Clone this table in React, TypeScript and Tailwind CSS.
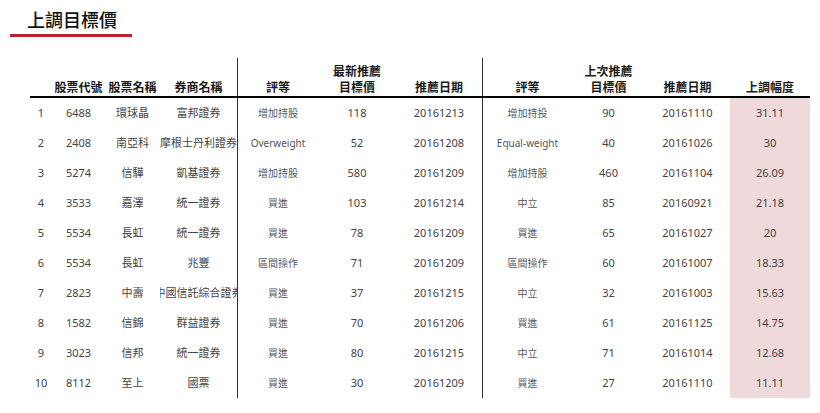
const cols =
  'grid grid-cols-[22px_53px_55px_77px_81px_78px_86px_90px_73px_85px_80px]'

type Row = {
  no: number
  code: string
  name: string
  broker: string
  rating: string
  target: number
  date: string
  prevRating: string
  prevTarget: number
  prevDate: string
  change: string
}

const rows: Row[] = [
  { no: 1, code: '6488', name: '環球晶', broker: '富邦證券', rating: '增加持股', target: 118, date: '20161213', prevRating: '增加持投', prevTarget: 90, prevDate: '20161110', change: '31.11' },
  { no: 2, code: '2408', name: '南亞科', broker: '摩根士丹利證券', rating: 'Overweight', target: 52, date: '20161208', prevRating: 'Equal-weight', prevTarget: 40, prevDate: '20161026', change: '30' },
  { no: 3, code: '5274', name: '信驊', broker: '凱基證券', rating: '增加持股', target: 580, date: '20161209', prevRating: '增加持股', prevTarget: 460, prevDate: '20161104', change: '26.09' },
  { no: 4, code: '3533', name: '嘉澤', broker: '統一證券', rating: '買進', target: 103, date: '20161214', prevRating: '中立', prevTarget: 85, prevDate: '20160921', change: '21.18' },
  { no: 5, code: '5534', name: '長虹', broker: '統一證券', rating: '買進', target: 78, date: '20161209', prevRating: '買進', prevTarget: 65, prevDate: '20161027', change: '20' },
  { no: 6, code: '5534', name: '長虹', broker: '兆豐', rating: '區間操作', target: 71, date: '20161209', prevRating: '區間操作', prevTarget: 60, prevDate: '20161007', change: '18.33' },
  { no: 7, code: '2823', name: '中壽', broker: '中國信託綜合證券', rating: '買進', target: 37, date: '20161215', prevRating: '中立', prevTarget: 32, prevDate: '20161003', change: '15.63' },
  { no: 8, code: '1582', name: '信錦', broker: '群益證券', rating: '買進', target: 70, date: '20161206', prevRating: '買進', prevTarget: 61, prevDate: '20161125', change: '14.75' },
  { no: 9, code: '3023', name: '信邦', broker: '統一證券', rating: '買進', target: 80, date: '20161215', prevRating: '中立', prevTarget: 71, prevDate: '20161014', change: '12.68' },
  { no: 10, code: '8112', name: '至上', broker: '國票', rating: '買進', target: 30, date: '20161209', prevRating: '買進', prevTarget: 27, prevDate: '20161110', change: '11.11' },
]

const HeadCell = ({ lines, divider }: { lines: string[]; divider?: boolean }) => (
  <div
    className={`flex flex-col items-center justify-end text-center leading-[16px] ${
      divider ? 'border-l border-[#333]' : ''
    }`}
  >
    {lines.map((l) => (
      <span key={l} className="whitespace-nowrap">
        {l}
      </span>
    ))}
  </div>
)

const Cell = ({
  children,
  divider,
  small,
  pink,
}: {
  children: React.ReactNode
  divider?: boolean
  small?: boolean
  pink?: boolean
}) => (
  <div
    className={`flex items-center justify-center overflow-hidden whitespace-nowrap ${
      divider ? 'border-l border-[#333]' : ''
    } ${small ? 'text-[10px] text-[#555]' : 'text-[11px] text-[#444]'} ${pink ? 'bg-[#efd9da]' : ''}`}
  >
    {children}
  </div>
)

export default function App() {
  return (
    <div className="relative h-[413px] w-[820px] overflow-hidden bg-white font-['Noto_Sans','Noto_Sans_CJK_TC',sans-serif]">
      <div className="pl-[27px] pt-[8px] text-[18px] leading-[24px] font-medium text-[#111]">
        上調目標價
      </div>
      <div className="ml-[10px] mt-[2px] h-[3px] w-[122px] bg-[#b3262b]" />

      <div className="ml-[30px] mt-[21px] w-[780px]">
        <div className={`${cols} h-[38px] text-[12px] font-semibold text-[#1a1a1a]`}>
          <HeadCell lines={['']} />
          <HeadCell lines={['股票代號']} />
          <HeadCell lines={['股票名稱']} />
          <HeadCell lines={['券商名稱']} />
          <HeadCell lines={['評等']} divider />
          <HeadCell lines={['最新推薦', '目標價']} />
          <HeadCell lines={['推薦日期']} />
          <HeadCell lines={['評等']} divider />
          <HeadCell lines={['上次推薦', '目標價']} />
          <HeadCell lines={['推薦日期']} />
          <HeadCell lines={['上調幅度']} />
        </div>
        <div className="h-[2px] bg-black" />

        {rows.map((r) => (
          <div key={r.no} className={`${cols} h-[30px]`}>
            <Cell>{r.no}</Cell>
            <Cell>{r.code}</Cell>
            <Cell>{r.name}</Cell>
            <Cell>{r.broker}</Cell>
            <Cell divider small>
              {r.rating}
            </Cell>
            <Cell>{r.target}</Cell>
            <Cell>{r.date}</Cell>
            <Cell divider small>
              {r.prevRating}
            </Cell>
            <Cell>{r.prevTarget}</Cell>
            <Cell>{r.prevDate}</Cell>
            <Cell pink>{r.change}</Cell>
          </div>
        ))}
      </div>
    </div>
  )
}
